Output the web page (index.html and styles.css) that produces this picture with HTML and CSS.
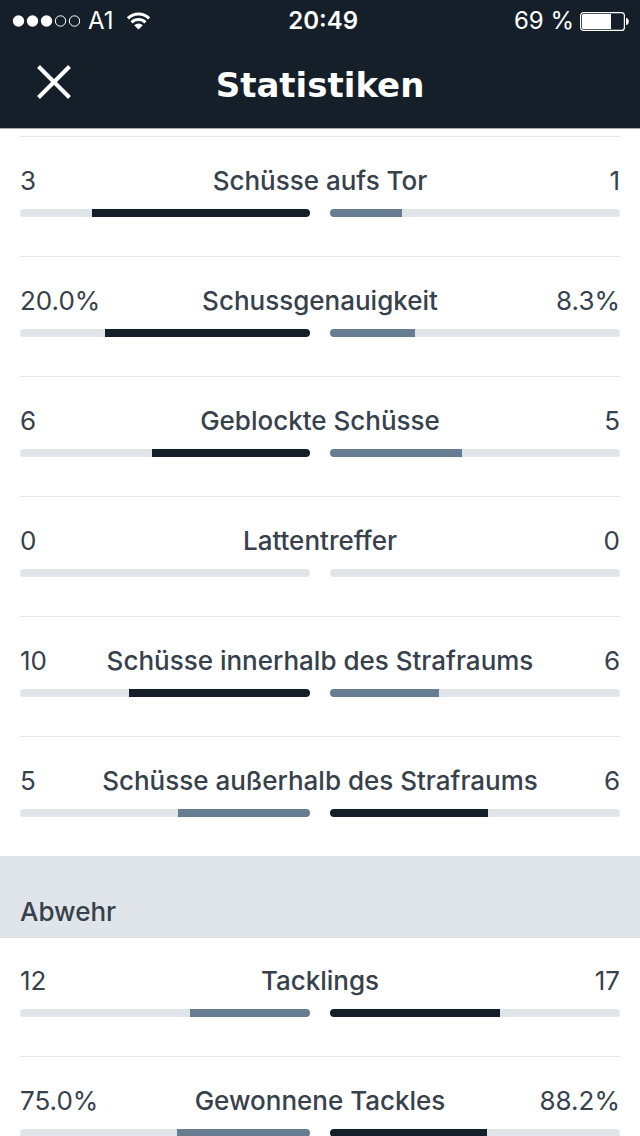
FILE: index.html
```html
<!DOCTYPE html>
<html lang="de">
<head>
<meta charset="utf-8">
<meta name="viewport" content="width=device-width, initial-scale=1">
<title>Statistiken</title>
<link rel="stylesheet" href="styles.css">
</head>
<body>
<header class="top">
  <div class="status">
    <div class="carrier">
      <svg class="signal" viewBox="0 0 68 12" width="68" height="12" aria-hidden="true">
        <g fill="#fff"><circle cx="6.500" cy="6" r="5.700"/><circle cx="20.500" cy="6" r="5.700"/><circle cx="34.500" cy="6" r="5.700"/></g>
        <g fill="none" stroke="#fff"><circle cx="48.500" cy="6" r="5.200"/><circle cx="62.500" cy="6" r="5.200"/></g>
      </svg>
      <span>A1</span>
      <svg class="wifi" viewBox="0 0 26 19" width="25" height="18" aria-hidden="true">
        <g fill="none" stroke="#fff" stroke-width="3.200">
          <path d="M1.800 6.700a15.800 15.800 0 0 1 22.400 0"/>
          <path d="M5.700 11a10.300 10.300 0 0 1 14.600 0"/>
        </g>
        <path fill="#fff" d="M13 18.600l-4.600-4.600a6.500 6.500 0 0 1 9.200 0z"/>
      </svg>
    </div>
    <time class="clock">20:49</time>
    <div class="power">
      <span>69 %</span>
      <svg viewBox="0 0 49 19" width="49" height="19" aria-hidden="true">
        <rect x=".6" y=".6" width="43.800" height="17.800" rx="3" fill="none" stroke="#fff" stroke-width="1.200"/>
        <path fill="#fff" d="M3.500 2H31v15H3.500A1.500 1.500 0 0 1 2 15.500v-12A1.500 1.500 0 0 1 3.500 2zM46 6c1.600 0 2.800 1.300 2.800 3.500S47.600 13 46 13z"/>
      </svg>
    </div>
  </div>
  <div class="nav">
    <button class="close" type="button" aria-label="Schließen">
      <svg viewBox="0 0 34 34" width="34" height="34" aria-hidden="true"><path d="M1.500 1.500l31 31M32.500 1.500l-31 31" stroke="#fff" stroke-width="4"/></svg>
    </button>
    <h1 class="title">Statistiken</h1>
  </div>
</header>
<main class="content">
  <section class="group shots">
    <div class="stat">
      <div class="line"><span>3</span><h3 class="label">Schüsse aufs Tor</h3><span>1</span></div>
      <div class="bars"><div class="bar home"><div class="fill lead" style="width:75.2%"></div></div><div class="bar"><div class="fill" style="width:24.8%"></div></div></div>
    </div>
    <div class="stat">
      <div class="line"><span>20.0%</span><h3 class="label">Schussgenauigkeit</h3><span>8.3%</span></div>
      <div class="bars"><div class="bar home"><div class="fill lead" style="width:70.7%"></div></div><div class="bar"><div class="fill" style="width:29.3%"></div></div></div>
    </div>
    <div class="stat">
      <div class="line"><span>6</span><h3 class="label">Geblockte Schüsse</h3><span>5</span></div>
      <div class="bars"><div class="bar home"><div class="fill lead" style="width:54.5%"></div></div><div class="bar"><div class="fill" style="width:45.5%"></div></div></div>
    </div>
    <div class="stat">
      <div class="line"><span>0</span><h3 class="label">Lattentreffer</h3><span>0</span></div>
      <div class="bars"><div class="bar home"></div><div class="bar"></div></div>
    </div>
    <div class="stat">
      <div class="line"><span>10</span><h3 class="label">Schüsse innerhalb des Strafraums</h3><span>6</span></div>
      <div class="bars"><div class="bar home"><div class="fill lead" style="width:62.5%"></div></div><div class="bar"><div class="fill" style="width:37.5%"></div></div></div>
    </div>
    <div class="stat">
      <div class="line"><span>5</span><h3 class="label">Schüsse außerhalb des Strafraums</h3><span>6</span></div>
      <div class="bars"><div class="bar home"><div class="fill" style="width:45.5%"></div></div><div class="bar"><div class="fill lead" style="width:54.5%"></div></div></div>
    </div>
  </section>
  <h2 class="heading">Abwehr</h2>
  <section class="group defence">
    <div class="stat">
      <div class="line"><span>12</span><h3 class="label">Tacklings</h3><span>17</span></div>
      <div class="bars"><div class="bar home"><div class="fill" style="width:41.4%"></div></div><div class="bar"><div class="fill lead" style="width:58.6%"></div></div></div>
    </div>
    <div class="stat">
      <div class="line"><span>75.0%</span><h3 class="label">Gewonnene Tackles</h3><span>88.2%</span></div>
      <div class="bars"><div class="bar home"><div class="fill" style="width:45.9%"></div></div><div class="bar"><div class="fill lead" style="width:54.1%"></div></div></div>
    </div>
  </section>
</main>
</body>
</html>
```
FILE: styles.css
```css
* { box-sizing: border-box; }

body {
  margin: 0;
  height: 100vh;
  display: flex;
  flex-direction: column;
  overflow: hidden;
  background: #fff;
  color: #36414c;
  font-family: Inter, "Liberation Sans", sans-serif;
  font-size: 26px;
  line-height: 32px;
}

h1, h2, h3 { margin: 0; font-size: inherit; }

.top {
  flex: none;
  background: #151f29;
  border-bottom: 1px solid #aaa;
  color: #fff;
}

.status {
  display: grid;
  grid-template-columns: 51fr auto 50fr;
  align-items: center;
  height: 42px;
  padding: 0 11px 0 12px;
  font-size: 24px;
}

.carrier, .power { display: flex; align-items: center; }
.carrier { gap: 8px; }
.wifi { margin-left: 4px; }
.power { justify-content: flex-end; gap: 6px; }
.clock { font-weight: 600; }

.nav {
  display: grid;
  grid-template-columns: 68px 1fr 68px;
  align-items: center;
  height: 86px;
  padding: 0 20px;
}

.close {
  display: flex;
  padding: 14px 17px 20px;
  border: 0;
  background: none;
  cursor: pointer;
}

.close svg { flex: none; }

.title {
  text-align: center;
  font-family: "DejaVu Sans", sans-serif;
  font-size: 34px;
  font-weight: 700;
  line-height: 40px;
}

.content {
  flex: 1;
  min-height: 0;
  overflow-y: auto;
  scrollbar-width: none;
}

.group { padding: 0 20px; }
.shots { padding-top: 7px; }

.stat {
  height: 120px;
  padding-top: 28px;
  border-top: 1px solid #e0e5e9;
}

.defence .stat:first-child {
  height: 118px;
  padding-top: 27px;
  border-top: 0;
}

.line {
  display: grid;
  grid-template-columns: 1fr auto 1fr;
}

.line span:last-child { text-align: right; }
.label { font-weight: 500; }

.bars {
  display: grid;
  grid-template-columns: 1fr 1fr;
  gap: 20px;
  margin-top: 12px;
}

.bar {
  display: flex;
  height: 8px;
  border-radius: 4px;
  overflow: hidden;
  background: #e0e5e9;
}

.home { justify-content: flex-end; }
.fill { background: #667d91; }
.lead { background: #151f29; }

.heading {
  height: 82px;
  padding: 39px 20px 9px;
  border: 1px solid #dbe1e5;
  border-width: 1px 0;
  background: #e0e5e9;
  font-weight: 500;
}
```
